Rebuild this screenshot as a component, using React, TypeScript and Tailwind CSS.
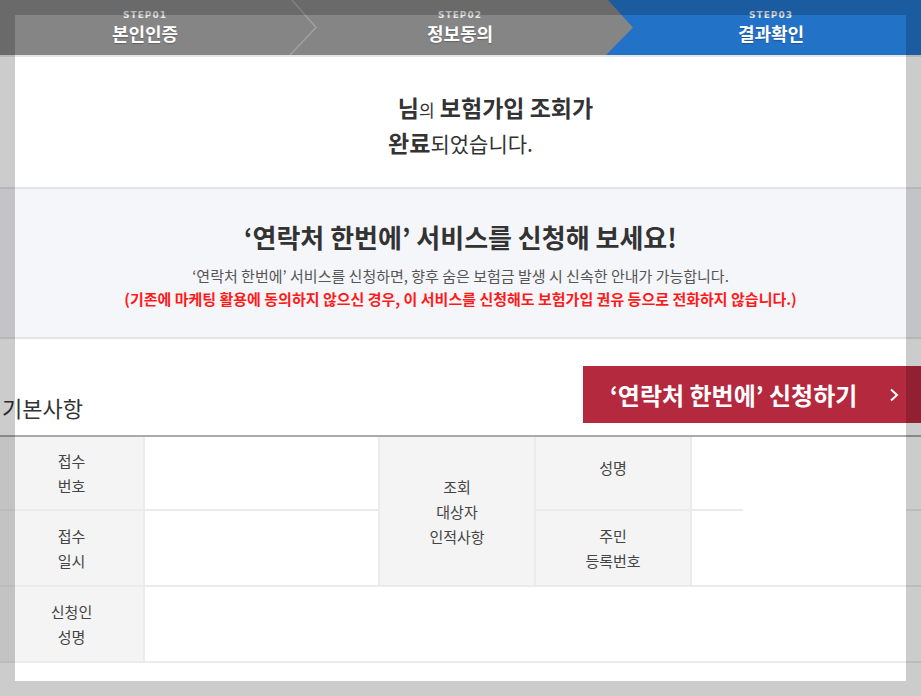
import React from "react";

const font = { fontFamily: '"Noto Sans CJK KR", "Noto Sans", sans-serif' };

function StepBar() {
  return (
    <div className="relative h-[55px] w-full">
      {/* step background drawing */}
      <svg className="absolute inset-0" width="921" height="55" viewBox="0 0 921 55">
        <rect x="0" y="0" width="921" height="55" fill="#858585" />
        <polygon points="608,0 921,0 921,55 606,55 633,27.5" fill="#2272c8" />
        <polyline points="292,0 316,27.5 290,55" fill="none" stroke="#a0a0a0" strokeWidth="1.5" />
      </svg>
      <div className="relative flex h-full text-white">
        {[
          ["STEP01", "본인인증", "w-[290px]"],
          ["STEP02", "정보동의", "w-[340px]"],
          ["STEP03", "결과확인", "w-[282px]"],
        ].map(([s, label, w]) => (
          <div key={s} className={`${w} flex flex-col items-center pt-[9px]`}>
            <span
              className="text-[9px] font-bold leading-[12px] tracking-[1px] text-[#e8e8e8]"
              style={{ fontFamily: '"DejaVu Sans", sans-serif' }}
            >
              {s}
            </span>
            <span className="mt-[1px] text-[18px] font-bold leading-[23px] [text-shadow:0_1px_1px_rgba(0,0,0,0.25)]">
              {label}
            </span>
          </div>
        ))}
      </div>
    </div>
  );
}

function Th({ lines, className = "" }: { lines: string[]; className?: string }) {
  return (
    <div
      className={`flex flex-col items-center justify-center bg-[#f4f4f4] text-[15px] leading-[25px] text-[#444] border-[#ebebeb] ${className}`}
    >
      {lines.map((l) => (
        <span key={l}>{l}</span>
      ))}
    </div>
  );
}

export default function App() {
  return (
    <div className="relative w-[921px] h-[696px] overflow-hidden bg-white text-[#333]" style={font}>
      <StepBar />
      <div className="h-[2px] bg-[#e6e6e6]" />

      {/* result title */}
      <div className="flex h-[130px] flex-col items-center justify-center pt-[8px] text-[#333]">
        <div className="leading-[32px]">
          <span className="inline-block w-[70px]" />
          <span className="text-[23px] font-bold">님</span>
          <span className="text-[17px]">의</span>
          <span className="text-[23px] font-bold"> 보험가입 조회가</span>
        </div>
        <div className="leading-[32px]">
          <span className="text-[23px] font-bold">완료</span>
          <span className="text-[21px]">되었습니다.</span>
        </div>
      </div>

      {/* service band */}
      <div className="flex h-[152px] flex-col items-center border-y-2 border-[#e4e4e4] bg-[#f5f6fa] pt-[31px]">
        <h2 className="text-[26px] font-bold leading-[34px] text-[#333]">
          ‘연락처 한번에’ 서비스를 신청해 보세요!
        </h2>
        <p className="mt-[10px] text-[15px] leading-[23px] text-[#555]">
          ‘연락처 한번에’ 서비스를 신청하면, 향후 숨은 보험금 발생 시 신속한 안내가 가능합니다.
        </p>
        <p className="text-[15px] font-bold leading-[23px] text-[#ff1a1a]">
          (기존에 마케팅 활용에 동의하지 않으신 경우, 이 서비스를 신청해도 보험가입 권유 등으로 전화하지 않습니다.)
        </p>
      </div>

      {/* heading + button */}
      <div className="mt-[27px] flex h-[69px] items-start">
        <h3 className="mt-[26px] pl-[2px] text-[22px] leading-[30px] text-[#333]">기본사항</h3>
        <button className="ml-auto flex h-[57px] w-[338px] items-center justify-between bg-[#b5293f] pl-[27px] pr-[22px] text-white">
          <span className="text-[24px] font-bold leading-[32px]">‘연락처 한번에’ 신청하기</span>
          <svg width="10" height="14" viewBox="0 0 10 14">
            <polyline points="2,1.5 8,7 2,12.5" fill="none" stroke="#fff" strokeWidth="2" />
          </svg>
        </button>
      </div>

      {/* table */}
      <div className="grid grid-cols-[145px_235px_156px_156px_1fr] grid-rows-[74px_76px_76px] border-t-2 border-[#aaaaaa]">
        <Th lines={["접수", "번호"]} className="border-r-2 border-b-2" />
        <div className="border-r-2 border-b-2 border-[#ebebeb]" />
        <Th lines={["조회", "대상자", "인적사항"]} className="row-span-2 border-r-2 border-b-2" />
        <Th lines={["성명"]} className="border-r-2 border-b-2 justify-start pt-[18px]" />
        <div className="flex flex-col justify-end">
          <div className="flex justify-between">
            <div className="h-[2px] w-[51px] bg-[#ebebeb]" />
            <div className="h-[2px] w-[15px] bg-[#ebebeb]" />
          </div>
        </div>

        <Th lines={["접수", "일시"]} className="border-r-2 border-b-2" />
        <div className="border-r-2 border-b-2 border-[#ebebeb]" />
        <Th lines={["주민", "등록번호"]} className="border-r-2 border-b-2" />
        <div className="border-b-2 border-[#ebebeb]" />

        <Th lines={["신청인", "성명"]} className="border-r-2 border-b-2" />
        <div className="col-span-4 border-b-2 border-[#ebebeb]" />
      </div>

      {/* capture highlight overlay */}
      <div className="pointer-events-none absolute left-[15px] top-[15px] h-[666px] w-[891px] shadow-[0_0_0_9999px_rgba(0,0,0,0.2)]" />
    </div>
  );
}
